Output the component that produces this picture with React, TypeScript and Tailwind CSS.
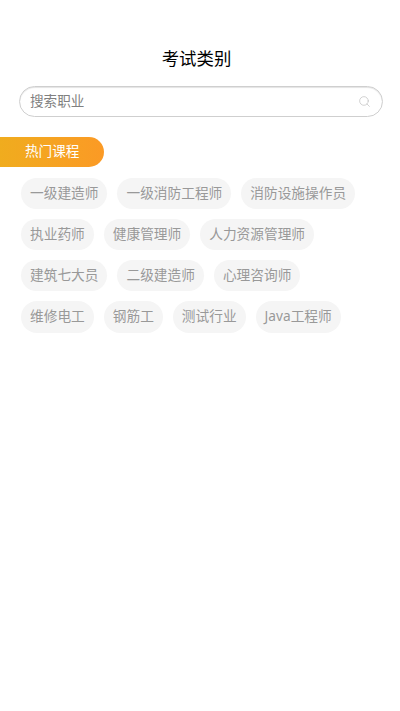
import { Search } from "lucide-react";

const tags = [
  "一级建造师",
  "一级消防工程师",
  "消防设施操作员",
  "执业药师",
  "健康管理师",
  "人力资源管理师",
  "建筑七大员",
  "二级建造师",
  "心理咨询师",
  "维修电工",
  "钢筋工",
  "测试行业",
  "Java工程师",
];

export default function App() {
  return (
    <div className="min-h-[711px] bg-white font-['Noto_Sans','Noto_Sans_CJK_SC',sans-serif]">
      <h1 className="pt-[46px] pr-[7px] text-center text-[17.4px] leading-[25px] text-black">考试类别</h1>

      <div className="ml-[19px] mt-[15.4px] flex h-[30.9px] w-[363.6px] items-center justify-between rounded-full border-[1.4px] border-[#cfcfcf] pb-px pl-[10px] pr-[11px] shadow-[inset_0_1px_1px_#e4e4e4]">
        <span className="text-[13.6px] text-[#808080]">搜索职业</span>
        <Search className="h-[13px] w-[13px] text-[#bbbbbb]" strokeWidth={1.2} />
      </div>

      <div className="mt-[19.4px] flex h-[30.6px] w-[104px] items-center rounded-r-full bg-gradient-to-r from-[#f0ac1e] to-[#fb9a25] pb-px pl-[25px] text-[13.6px] text-white">
        热门课程
      </div>

      <div className="mt-[10.6px] flex flex-wrap gap-x-[10px] gap-y-[10px] px-[21px]">
        {tags.map((t) => (
          <div
            key={t}
            className="flex h-[31.2px] items-center rounded-full bg-[#f5f5f5] px-[9px] pb-px text-[13.7px] text-[#999999]"
          >
            {t}
          </div>
        ))}
      </div>
    </div>
  );
}
